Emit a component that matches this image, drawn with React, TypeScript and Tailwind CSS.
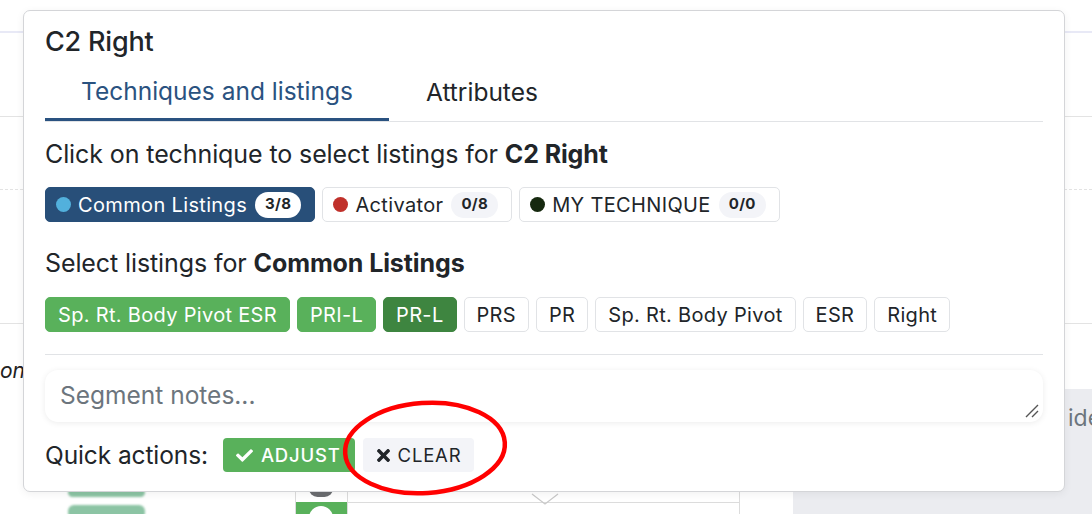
import React from 'react';

const techniques = [
  { id: 'common', label: 'Common Listings', dot: 'bg-[#52b0dc]', count: '3/8', active: true },
  { id: 'activator', label: 'Activator', dot: 'bg-[#c0312b]', count: '0/8', active: false },
  { id: 'mine', label: 'MY TECHNIQUE', dot: 'bg-[#16290f]', count: '0/0', active: false },
];

const listings = [
  { label: 'Sp. Rt. Body Pivot ESR', state: 'on' },
  { label: 'PRI-L', state: 'on' },
  { label: 'PR-L', state: 'dark' },
  { label: 'PRS', state: 'off' },
  { label: 'PR', state: 'off' },
  { label: 'Sp. Rt. Body Pivot', state: 'off' },
  { label: 'ESR', state: 'off' },
  { label: 'Right', state: 'off' },
];

const chipClass: Record<string, string> = {
  on: 'bg-[#59b15b] border-[#59b15b] text-white',
  dark: 'bg-[#3e8540] border-[#3e8540] text-white',
  off: 'bg-white border-[#e1e3e6] text-[#212529]',
};

// the page sitting behind the popover
function Backdrop() {
  return (
    <div className="absolute inset-0">
      <div className="absolute left-0 top-[31px] w-full h-[2px] bg-[#e8e9f6]" />
      <div className="absolute left-0 top-[116px] w-full h-px bg-[#e3e3e3]" />
      <div className="absolute left-0 top-[189px] w-full border-t border-dashed border-[#e3e3e3]" />
      <div className="absolute left-0 top-[323px] w-full h-px bg-[#e3e3e3]" />
      <div className="absolute left-0 top-[360px] italic text-[21px] text-[#222] leading-none">on</div>
      <div className="absolute left-[793px] top-[389px] right-0 bottom-0 bg-[#ebecf0] pl-[275px] pt-[12px] text-[23px] text-[#6c757d]">
        ide
      </div>
      <div className="absolute left-[295px] top-[480px] w-[445px] h-[40px] border-l border-r border-[#dcdcdc]">
        <div className="absolute left-0 top-[22px] w-[51px] h-[20px] bg-[#59b15b]" />
        <div className="absolute left-[13px] top-[26px] w-[24px] h-[24px] rounded-full bg-white" />
        <div className="absolute left-[13px] top-0 w-[24px] h-[17px] rounded-full bg-[#6b6d70]" />
        <div className="absolute left-[51px] top-0 bottom-0 w-px bg-[#dcdcdc]" />
        <div className="absolute left-[51px] right-0 top-[22px] h-px bg-[#dcdcdc]" />
        <svg className="absolute left-[234px] top-[12px]" width="30" height="14" viewBox="0 0 30 14">
          <path d="M2 2 L15 12 L28 2" fill="none" stroke="#c9c9c9" strokeWidth="1.2" />
        </svg>
      </div>
      <div className="absolute left-[68px] top-[488px] w-[77px] h-[9px] rounded-md bg-[#8cc4a4] blur-[1px]" />
      <div className="absolute left-[68px] top-[505px] w-[77px] h-[14px] rounded-md bg-[#8cc4a4] blur-[1px]" />
    </div>
  );
}

export default function App() {
  return (
    <div
      className="relative w-[1092px] h-[514px] overflow-hidden bg-white text-[#212529] pl-[23px] pt-[10px]"
      style={{ fontFamily: 'Inter, "Noto Sans", Arial, sans-serif' }}
    >
      <Backdrop />

      <div className="relative w-[1042px] h-[482px] bg-white border border-[#d4d5d8] rounded-[7px] shadow-[0_2px_8px_rgba(0,0,0,0.06)] px-[21px] pt-[15px]">
        <h2 className="text-[27px] leading-[32px] font-medium text-[#212529] tracking-[-0.2px]">C2 Right</h2>

        <div className="mt-[6px] flex border-b border-[#e1e3e6]">
          <div className="h-[57px] px-[36px] flex items-center text-[24.5px] text-[#2a5280] border-b-[3px] border-[#2a5280] -mb-px">
            Techniques and listings
          </div>
          <div className="h-[57px] px-[37px] flex items-center text-[24.5px] text-[#212529]">Attributes</div>
        </div>

        <p className="mt-[17px] text-[25px] leading-[30px] tracking-[-0.1px]">
          Click on technique to select listings for <span className="font-bold">C2 Right</span>
        </p>

        <div className="mt-[18px] flex gap-[7px]">
          {techniques.map((t) => (
            <button
              key={t.id}
              className={`h-[35px] pl-[10px] pr-[13px] flex items-center gap-[7px] rounded-[5px] border text-[20px] tracking-[0.35px] ${
                t.active ? 'bg-[#284f79] border-[#284f79] text-white' : 'bg-white border-[#e1e3e6] text-[#212529]'
              }`}
            >
              <span className={`w-[15px] h-[15px] rounded-full ${t.dot}`} />
              <span>{t.label}</span>
              <span
                className={`ml-[1px] h-[26px] px-[10px] flex items-center rounded-full text-[15px] font-bold ${
                  t.active ? 'bg-white text-[#212529]' : 'bg-[#f3f4f8] text-[#212529]'
                }`}
              >
                {t.count}
              </span>
            </button>
          ))}
        </div>

        <p className="mt-[26px] text-[25px] leading-[30px] tracking-[-0.1px]">
          Select listings for <span className="font-bold">Common Listings</span>
        </p>

        <div className="mt-[19px] flex gap-[7px]">
          {listings.map((l) => (
            <span
              key={l.label}
              className={`h-[35px] px-[12px] flex items-center rounded-[5px] border text-[20px] tracking-[0.32px] ${chipClass[l.state]}`}
            >
              {l.label}
            </span>
          ))}
        </div>

        <div className="mt-[22px] h-px bg-[#e1e3e6]" />

        <div className="relative mt-[15px]">
          <textarea
            placeholder="Segment notes..."
            className="block w-full h-[52px] rounded-[13px] bg-white px-[15px] py-[10px] text-[24.5px] leading-[30px] text-[#212529] placeholder:text-[#6c757d] shadow-[0_1px_6px_rgba(0,0,0,0.08)] outline-none resize-none"
          />
          <svg className="absolute right-[4px] bottom-[4px]" width="14" height="14" viewBox="0 0 14 14">
            <path d="M1 13 L13 1 M7 13 L13 7" stroke="#555" strokeWidth="1.4" />
          </svg>
        </div>

        <div className="mt-[15px] flex items-center">
          <span className="text-[24.5px] tracking-[-0.1px] mr-[15px]">Quick actions:</span>
          <button className="h-[34px] pl-[13px] pr-[14px] flex items-center gap-[8px] rounded-[4px] bg-[#59b15b] text-white text-[18.5px] tracking-[0.8px] font-medium">
            <svg width="17" height="14" viewBox="0 0 512 420">
              <path
                fill="currentColor"
                d="M173.9 407.7L7.5 241.3c-10-10-10-26.2 0-36.2l36.2-36.2c10-10 26.2-10 36.2 0L192 281.1 432.1 41c10-10 26.2-10 36.2 0l36.2 36.2c10 10 10 26.2 0 36.2L210.1 407.7c-10 10-26.2 10-36.2 0z"
              />
            </svg>
            ADJUST
          </button>
          <button className="ml-[8px] h-[34px] pl-[14px] pr-[13px] flex items-center gap-[8px] rounded-[4px] bg-[#f3f4f8] text-[#212529] text-[18.5px] tracking-[0.8px]">
            <svg width="13" height="13" viewBox="0 0 352 352">
              <path
                fill="currentColor"
                d="M242.7 176L342.8 75.9c12.3-12.3 12.3-32.2 0-44.5L320.6 9.2c-12.3-12.3-32.2-12.3-44.5 0L176 109.3 75.9 9.2C63.6-3.1 43.7-3.1 31.4 9.2L9.2 31.4c-12.3 12.3-12.3 32.2 0 44.5L109.3 176 9.2 276.1c-12.3 12.3-12.3 32.2 0 44.5l22.2 22.2c12.3 12.3 32.2 12.3 44.5 0L176 242.7l100.1 100.1c12.3 12.3 32.2 12.3 44.5 0l22.2-22.2c12.3-12.3 12.3-32.2 0-44.5L242.7 176z"
              />
            </svg>
            CLEAR
          </button>
        </div>
      </div>

      {/* annotation drawn over the screenshot */}
      <svg className="absolute left-[330px] top-[396px] pointer-events-none" width="190" height="104" viewBox="0 0 190 104">
        <ellipse cx="95" cy="52" rx="80" ry="45" fill="none" stroke="#ff0000" strokeWidth="4.5" transform="rotate(-4 95 52)" />
      </svg>
    </div>
  );
}
